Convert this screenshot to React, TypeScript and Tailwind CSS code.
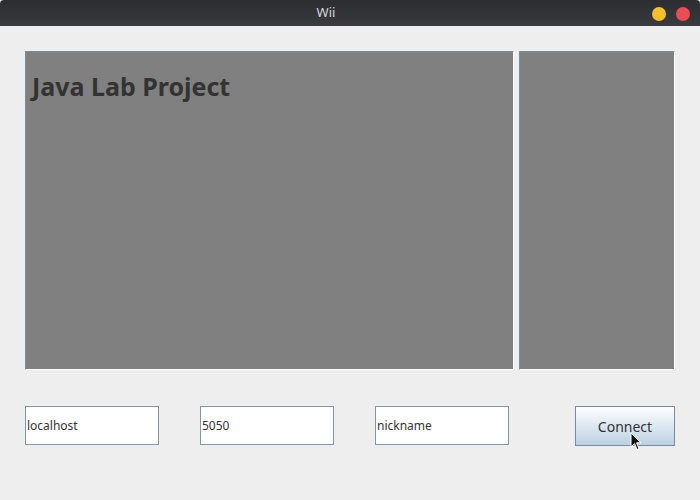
export default function App() {
  return (
    <div className="w-[700px] h-[500px] flex flex-col bg-[#eeeeee] font-['Noto_Sans',sans-serif] overflow-hidden">
      {/* title bar */}
      <div className="relative h-[26px] bg-gradient-to-b from-[#2c2d30] to-[#3a3b3f] rounded-t-[4px] flex items-center justify-center pr-[48px]">
        <span className="text-[13px] text-[#d6d6d6]">Wii</span>
        <div className="absolute right-[10px] top-[7px] flex gap-[10px]">
          <div className="w-[14px] h-[14px] rounded-full bg-[#f4bf2f]" />
          <div className="w-[14px] h-[14px] rounded-full bg-[#ec4c55]" />
        </div>
      </div>

      <div className="flex-1 pt-[25px] px-[25px]">
        <div className="flex gap-[5px] h-[319px]">
          <div className="w-[490px] bg-[#808080] border-t border-l border-[#7d8b99] border-r border-b border-r-white border-b-white pl-[6px] pt-[17px]">
            <h1 className="text-[25px] leading-[34px] font-bold text-[#333333]">Java Lab Project</h1>
          </div>
          <div className="w-[156px] bg-[#808080] border-t border-l border-[#7d8b99] border-r border-b border-r-white border-b-white" />
        </div>

        <div className="relative flex items-start mt-[36px]">
          <div className="w-[134px] h-[39px] bg-white border border-[#8595a5] flex items-center pl-[1px] text-[12px] text-[#333]">localhost</div>
          <div className="ml-[41px] w-[134px] h-[39px] bg-white border border-[#8595a5] flex items-center pl-[1px] text-[12px] text-[#333]">5050</div>
          <div className="ml-[41px] w-[134px] h-[39px] bg-white border border-[#8595a5] flex items-center pl-[1px] text-[12px] text-[#333]">nickname</div>
          <button className="ml-[66px] w-[100px] h-[40px] border border-[#7a8a99] bg-gradient-to-b from-white to-[#bcd0e4] text-[14px] text-[#333] flex items-center justify-center">
            Connect
          </button>
          <svg className="absolute left-[605px] top-[26px]" width="12" height="19" viewBox="0 0 12 19">
            <path d="M1 1 L1 15 L4.5 11.5 L7 17.5 L9 16.5 L6.5 10.8 L11 10.8 Z" fill="#111" stroke="#fff" strokeWidth="1" strokeLinejoin="round" />
          </svg>
        </div>
      </div>
    </div>
  );
}
